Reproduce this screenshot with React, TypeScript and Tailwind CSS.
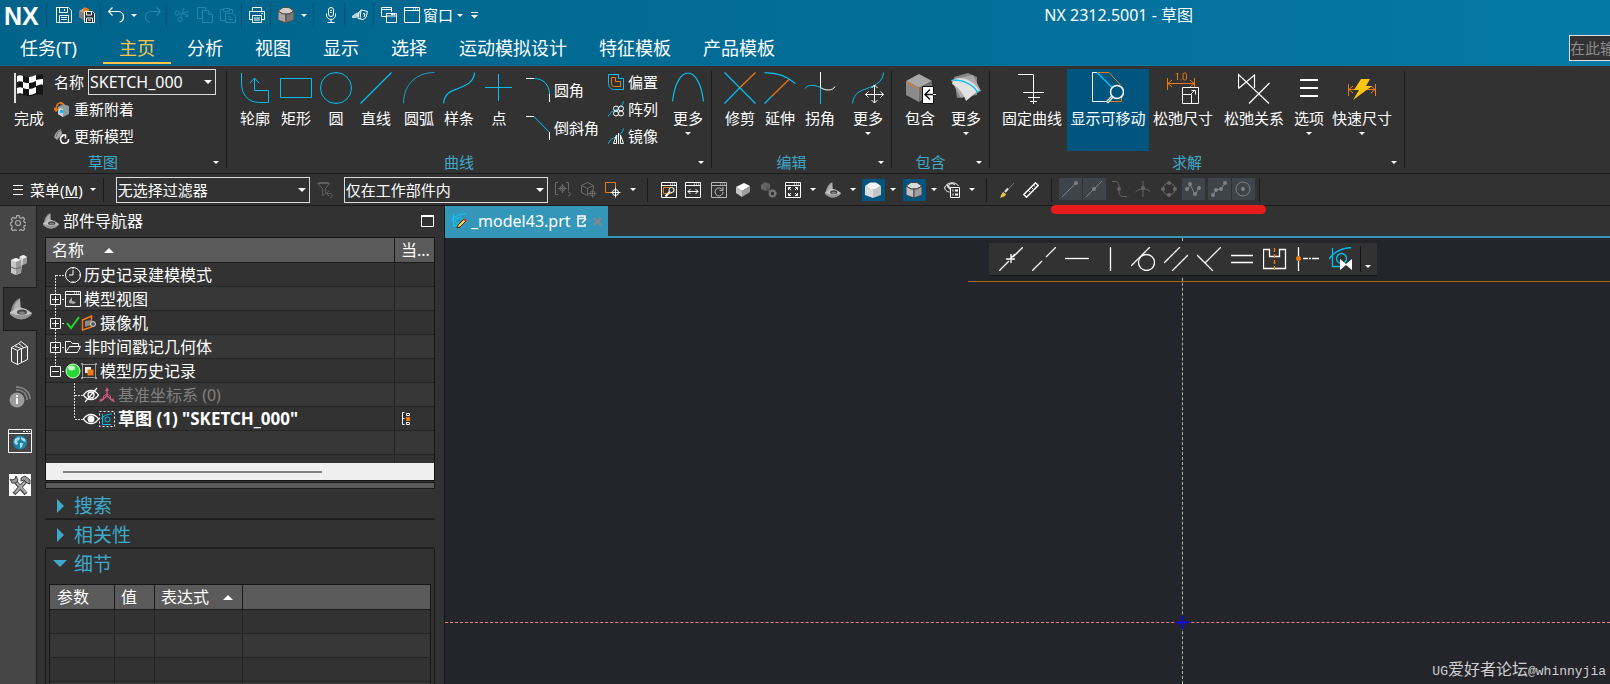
import { useState } from "react";
import type { ReactNode } from "react";

const CYAN = "#00c0f5";
const ORANGE = "#f07a10";

function Svg({
  w = 16,
  h,
  sw = 1,
  children,
}: {
  w?: number;
  h?: number;
  sw?: number;
  children: ReactNode;
}) {
  const height = h ?? w;
  return (
    <svg
      width={w}
      height={height}
      viewBox={`0 0 ${w} ${height}`}
      fill="none"
      stroke="currentColor"
      strokeWidth={sw}
      className="shrink-0"
      aria-hidden="true"
    >
      {children}
    </svg>
  );
}

function Caret({ big = false }: { big?: boolean }) {
  return big ? (
    <Svg w={8} h={4}>
      <path d="M0 0h8l-4 4z" fill="#fff" stroke="none" />
    </Svg>
  ) : (
    <Svg w={6} h={3}>
      <path d="M0 0h6l-3 3z" fill="#fff" stroke="none" />
    </Svg>
  );
}

// ---------- small icons ----------

function SaveIcon() {
  return (
    <Svg>
      <path d="M.5.5h12l3 3v12H.5z" />
      <path d="M3.5.5v5h8v-5M8.5 2v2M3.5 15.5v-7h9v7M5 10.5h6M5 12.5h6" />
    </Svg>
  );
}

function SaveAsIcon() {
  return (
    <Svg>
      <path d="M0 4l5-3 5 2v8l-5 2-5-3z" fill="#b8a79a" stroke="none" />
      <path d="M0 4l5 2v7l-5-3z" fill="#7f7f7f" stroke="none" />
      <path d="M5 0l5 2v3H4z" fill={ORANGE} stroke="none" />
      <path d="M5.5 4.5h8l2 2v9h-10z" fill="#263238" stroke="#fff" />
      <path d="M7.5 5v3h5V5M7.5 15v-4h6v4M9 13h3" stroke="#fff" />
    </Svg>
  );
}

function UndoIcon({ flip = false }: { flip?: boolean }) {
  return (
    <Svg sw={1.2}>
      {flip ? (
        <path d="M15.5 4.5H6c-4 0-5.5 3-5.5 5.5 0 3 2 5 4 5M11.5.5l4 4-4 4" />
      ) : (
        <path d="M.5 4.5H10c4 0 5.5 3 5.5 5.5 0 3-2 5-4 5M4.5.5l-4 4 4 4" />
      )}
    </Svg>
  );
}

function CutIcon() {
  return (
    <Svg>
      <circle cx="3" cy="6" r="2.2" />
      <circle cx="6" cy="12.5" r="2.3" />
      <path d="M5 7l10-2.5M7 10.5L10 1M9 6.5L15 9l-4 .5" />
    </Svg>
  );
}

function CopyIcon() {
  return (
    <Svg>
      <path d="M5.5 11.5h-5V.5h8v3" />
      <path d="M5.5 3.5h6l4 4v8h-10zM11.5 3.5v4h4" />
    </Svg>
  );
}

function PasteIcon() {
  return (
    <Svg>
      <path d="M5 13.5H.5v-11h3M10 2.5h2.5V6M3.5 1.5h6v3h-6z" />
      <path d="M5.5 6.5h7l3 3v6h-10zM8 10h3M8 12.5h5" />
    </Svg>
  );
}

function PrintIcon() {
  return (
    <Svg>
      <path d="M3.5 4.5v-4h9v4M3.5 12.5h-3v-8h15v8h-3" />
      <path d="M3.5 8.5h9v7h-9zM5 11h6M5 13h6M12 6.5h2" />
    </Svg>
  );
}

function SolidIcon({
  top = "#e6e6e6",
  left = "#b5b5b5",
  right = "#8f8f8f",
  line = "none",
  size = 16,
}: {
  top?: string;
  left?: string;
  right?: string;
  line?: string;
  size?: number;
}) {
  return (
    <svg width={size} height={size} viewBox="0 0 16 16" className="shrink-0" aria-hidden="true">
      <path d="M0 4L5 .5h6L16 4l-5 3H5z" fill={top} stroke={line} />
      <path d="M0 4l5 3h3v9l-8-3z" fill={left} stroke={line} />
      <path d="M16 4l-5 3H8v9l8-3z" fill={right} stroke={line} />
    </svg>
  );
}

// plain cube with a bright lid
function CubeIcon() {
  return (
    <Svg w={14}>
      <path d="M0 4l8-4 6 3-8 5z" fill="#fff" stroke="none" />
      <path d="M0 4l6 4v6l-6-4z" fill="#c4c4c4" stroke="none" />
      <path d="M14 3L6 8v6l8-5z" fill="#9c9c9c" stroke="none" />
    </Svg>
  );
}

function MicIcon() {
  return (
    <Svg>
      <rect x="5.5" y=".5" width="5" height="9" rx="2.5" />
      <path d="M3.5 6.5V8a4.5 4.5 0 009 0V6.5M8 12.5v3M4.5 15.5h7M7 3.5h2M7 5.5h2" />
    </Svg>
  );
}

function TouchIcon() {
  return (
    <Svg>
      <path d="M0 9l4-3 4-1-1 4-3 2H0z" fill="#b9d3de" stroke="none" />
      <path d="M6.5 5.5l3-2.5 6 1.5-1.5 6-3 2-5-1zM9 3L8 12" stroke="#fff" />
      <path d="M11 6.5l2 .5-1 3" stroke="#fff" />
    </Svg>
  );
}

function WindowsIcon() {
  return (
    <Svg>
      <path d="M5 9.5H.5v-9h10V5M.5 2.5h10" />
      <path d="M5.5 6.5h10v9h-10zM5.5 9h10M10 7.5h4" />
    </Svg>
  );
}

function WindowIcon() {
  return (
    <Svg>
      <path d="M.5.5h15v15H.5zM.5 3.5h15M9 2h1M11 2h1M13 2h1" />
    </Svg>
  );
}

function FunnelIcon() {
  return (
    <Svg>
      <path d="M.5 1.5l1-1h10l1 1-4 5v5l-3 2v-7zM.5 1.5h12" />
      <path d="M10 11.5h3c3 0 3 4 0 4M12 9l-2.5 2.5L12 14" />
    </Svg>
  );
}

function TargetIcon() {
  return (
    <Svg>
      <path d="M3 .5H.5v12H3M11 .5h2.5v8" />
      <circle cx="7.5" cy="6.5" r="2.5" />
      <path d="M7.5 2v9M3 6.5h9M13 10c3 0 3 4 0 4" />
    </Svg>
  );
}

function BoxTargetIcon() {
  return (
    <Svg>
      <path d="M.5 3.5l6-3 6 3v4M.5 3.5v7l6 3 1-.5M.5 3.5l6 3 6-3M6.5 6.5v7" />
      <circle cx="11.5" cy="11.5" r="2.5" />
      <path d="M11.5 7.5v8M7.5 11.5h8" />
    </Svg>
  );
}

function SquareTargetIcon() {
  return (
    <Svg>
      <path d="M7 10.5H.5V.5h10V6" stroke={ORANGE} />
      <circle cx="10.5" cy="10.5" r="3" />
      <path d="M10.5 5.5v10M5.5 10.5h10" />
    </Svg>
  );
}

function FrameIcon({ kind }: { kind: "zoom" | "width" | "rotate" | "fit" }) {
  return (
    <Svg>
      <path d="M.5.5h15v15H.5zM.5 3.5h15M9 2h1M11 2h1M13 2h1" />
      {kind === "zoom" && (
        <>
          <path d="M2.5 5.5h8v6h-8z" stroke={ORANGE} />
          <path d="M13 5.5v5" stroke={ORANGE} />
          <circle cx="10.5" cy="8" r="2.5" fill="#323232" />
          <path d="M8.5 10l-4 4.5" strokeWidth="2" />
        </>
      )}
      {kind === "width" && <path d="M3 9.5h10M5.5 7L3 9.5 5.5 12M10.5 7L13 9.5 10.5 12" />}
      {kind === "rotate" && <path d="M11.5 8a4 4 0 10.5 2M12 5v3.5H8.5" />}
      {kind === "fit" && (
        <path d="M3.5 8V5.5H6M3.5 5.5L6 8M10 5.5h2.5V8M12.5 5.5L10 8M3.5 11v2.5H6M3.5 13.5L6 11M10 13.5h2.5V11M12.5 13.5L10 11" />
      )}
    </Svg>
  );
}

function GearsIcon() {
  return (
    <Svg>
      <path d="M0 3l4-3 5 2v5L5 9 0 7z" fill="#626262" stroke="none" />
      <path d="M5 5l4 1v4l-4-2z" fill="#505050" stroke="none" />
      <circle cx="11.5" cy="11.5" r="2.7" stroke="#777" strokeWidth="2" />
      <circle cx="11.5" cy="11.5" r="4.2" stroke="#6a6a6a" strokeDasharray="1.5 1.5" />
    </Svg>
  );
}

// hinged bracket used for the part navigator
function PartIcon({ size = 16 }: { size?: number }) {
  return (
    <svg width={size} height={size} viewBox="0 0 22 22" className="shrink-0" aria-hidden="true">
      <path d="M1 13C2 7 5 2 10 0l1 10-9 5z" fill="#8a8a8a" />
      <path d="M3 13c1-6 3-9 7-12v8z" fill="#b0b0b0" />
      <path d="M0 14l9-5 7 2 6 4c-1 3-7 6-11 6S3 19 0 16z" fill="#c4c4c4" />
      <path d="M0 14.5c4 3 14 4 22 1-1 3-7 6-11 6S3 19 0 16.5z" fill="#949494" />
      <ellipse cx="12" cy="14" rx="5" ry="2.6" fill="#444" />
      <ellipse cx="12" cy="14.8" rx="3.3" ry="1.4" fill="#808080" />
    </svg>
  );
}

function ViewListIcon() {
  return (
    <Svg>
      <path d="M.5 6c2-6 11-7 14-2M.5 6c1 2 2 4 5 4M4 6a4 4 0 017-3" />
      <path d="M3 2.5L7 8" stroke="#ddd" strokeWidth="2" />
      <path d="M6.5 5.5h9v10h-9z" fill="#323232" />
      <path d="M8.5 8.5h1M11 8.5h3M8.5 12.5h1M11 12.5h3" strokeWidth="2" />
    </Svg>
  );
}

function BrushIcon() {
  return (
    <Svg>
      <path d="M15 1L7 9.5" stroke="#777" />
      <path d="M9 6.5L6 10" stroke="#ddd" strokeWidth="2" />
      <path d="M4 10l3 2c0 2-3 3-6 4 1-2 1-4 3-6z" fill="#e6c34a" stroke="none" />
    </Svg>
  );
}

function RulerIcon() {
  return (
    <Svg>
      <path d="M.8 12.5L12.5.8l2.7 2.7L3.5 15.2z" strokeWidth="1.5" />
      <path d="M5 8l2 2M8 5l2 2M10.5 3L12 4.5" />
    </Svg>
  );
}

type SnapKind = "end" | "mid" | "pole" | "cross" | "quad" | "curve" | "poly" | "center";

function SnapIcon({ kind }: { kind: SnapKind }) {
  const dot = (cx: number, cy: number) => (
    <circle key={`${cx}-${cy}`} cx={cx} cy={cy} r="2" fill="currentColor" stroke="none" />
  );
  return (
    <Svg>
      {kind === "end" && <path d="M0 16L14 2" />}
      {kind === "end" && dot(14, 2)}
      {kind === "mid" && <path d="M0 16L16 0" />}
      {kind === "mid" && dot(8, 8)}
      {kind === "pole" && <path d="M1 .5h3c3 0 4 2 4 6v3c0 4 1 6 4 6h4" />}
      {kind === "pole" && dot(8, 8)}
      {kind === "cross" && <path d="M8 0v16M.5 11c3-4 12-4 15 0" />}
      {kind === "cross" && dot(8, 7)}
      {kind === "quad" && <circle cx="8" cy="8" r="6" />}
      {kind === "quad" && [dot(8, 2), dot(2, 8), dot(14, 8), dot(8, 14)]}
      {kind === "curve" && <path d="M0 8h3l2-5 5 11 4-7" />}
      {kind === "curve" && [dot(2, 8), dot(5, 3), dot(10, 13), dot(14, 7)]}
      {kind === "poly" && <path d="M2 14l3-5 5-1 4-6" />}
      {kind === "poly" && [dot(2, 14), dot(5, 9), dot(10, 8), dot(14, 2)]}
      {kind === "center" && <circle cx="8" cy="8" r="7" />}
      {kind === "center" && dot(8, 8)}
    </Svg>
  );
}

// ---------- ribbon icons, 32px box ----------

function FlagIcon() {
  return (
    <Svg w={32}>
      <path d="M2 1v30" stroke="#ddd" strokeWidth="2" />
      <path d="M4 4c6-3 9 3 14 1s8-3 12-2v20c-5-1-7 0-12 1s-9-3-14-1z" fill="#151515" stroke="none" />
      <path
        d="M4 4c2-1 4-1 6 0v6c-2-1-4-1-6 0zM16 5c2 0 4-1 7-2v6c-3 1-4 2-7 2zM10 10c2 1 4 1 6 1v6c-2 0-4 0-6-1zM23 8c3-1 5-1 7-1v6c-2-1-4 0-7 1zM4 16c2-1 4-1 6 0v6c-2-1-4-1-6 0zM16 17c3 0 4-1 7-2v6c-3 1-4 2-7 2z"
        fill="#fff"
        stroke="none"
      />
    </Svg>
  );
}

function ProfileIcon() {
  return (
    <Svg w={32}>
      <path d="M2.5 1v10c0 11 6 19 17 19.5h10v-12h-14v-12M11 11l4.5-5 4.5 5" stroke={CYAN} />
    </Svg>
  );
}

function RectIcon() {
  return (
    <Svg w={32}>
      <path d="M.5 6.5h31v19H.5z" stroke={CYAN} />
    </Svg>
  );
}

function CircleIcon() {
  return (
    <Svg w={32}>
      <circle cx="16" cy="16" r="15.5" stroke={CYAN} />
    </Svg>
  );
}

function LineIcon() {
  return (
    <Svg w={32} sw={1.2}>
      <path d="M.5 31.5l31-31" stroke={CYAN} />
    </Svg>
  );
}

function ArcIcon() {
  return (
    <Svg w={32}>
      <path d="M.5 31.5C.5 13 13 .5 31.5.5" stroke="#1e9fc0" />
    </Svg>
  );
}

function SplineIcon() {
  return (
    <Svg w={32} sw={1.2}>
      <path d="M.5 31.5C2 20 9 19 15 16.5S31 11 31.5.5" stroke={CYAN} />
    </Svg>
  );
}

function PointIcon() {
  return (
    <Svg w={32}>
      <path d="M15.5 2v27M2 15.5h27" stroke={CYAN} />
    </Svg>
  );
}

function FilletIcon() {
  return (
    <Svg w={24}>
      <path d="M8 .5c9 0 15.5 6 15.5 16" stroke={CYAN} />
      <path d="M0 .5h8M23.5 16v8" stroke="#fff" />
    </Svg>
  );
}

function ChamferIcon() {
  return (
    <Svg w={24}>
      <path d="M8 .5l15.5 16" stroke={CYAN} />
      <path d="M0 .5h8M23.5 16v8" stroke="#fff" />
    </Svg>
  );
}

function OffsetIcon() {
  return (
    <Svg>
      <path d="M.5.5h10v4h5v11h-9c-4 0-6-3-6-6z" stroke={CYAN} />
      <path d="M3.5 3.5h4v4h5v5h-6c-2 0-3-1-3-3z" stroke={ORANGE} />
    </Svg>
  );
}

function PatternIcon() {
  return (
    <Svg>
      <path d="M.5 15.5C2 8 14 10 15.5.5" stroke={CYAN} />
      <circle cx="8" cy="7.5" r="2.5" />
      <circle cx="13" cy="7.5" r="2.5" />
      <circle cx="8" cy="12.5" r="2.5" />
      <circle cx="13" cy="12.5" r="2.5" />
    </Svg>
  );
}

function MirrorIcon() {
  return (
    <Svg>
      <path d="M.5 15.5C2 8 14 10 15.5.5" stroke={CYAN} />
      <path d="M5.5 15.5h3V7zM12.5 7v8.5h3zM10.5 5v11" />
    </Svg>
  );
}

function ParabolaIcon() {
  return (
    <Svg w={32} sw={1.2}>
      <path d="M.5 29.5C5-8.5 27-8.5 31.5 29.5" stroke={CYAN} />
    </Svg>
  );
}

function TrimIcon() {
  return (
    <Svg w={32} sw={1.2}>
      <path d="M.5.5l31 31M.5 31.5L16 15.5" stroke={CYAN} />
      <path d="M16 15.5L31.5.5" stroke={ORANGE} />
    </Svg>
  );
}

function ExtendIcon() {
  return (
    <Svg w={32} sw={1.2}>
      <path d="M.5.6c10 0 22 3 31 11M.5 31.5l7-7" stroke={CYAN} />
      <path d="M7.5 24.5L25 7.5" stroke={ORANGE} />
    </Svg>
  );
}

function CornerIcon() {
  return (
    <Svg w={32}>
      <path d="M1 16.5c3-4 9-4 15.5-1V32" stroke={CYAN} />
      <path d="M16.5 0v15.5c4 3 12 4 14.5-1" stroke="#fff" />
    </Svg>
  );
}

function MoveCurveIcon() {
  return (
    <Svg w={32}>
      <path d="M.5 31.5C2 20 9 19 15 16.5S31 11 31.5.5" stroke={CYAN} />
      <path
        d="M22.5 13v18M13.5 22.5h18M19.5 16l3-3 3 3M19.5 28l3 3 3-3M16.5 19.5l-3 3 3 3M28.5 19.5l3 3-3 3"
        stroke="#fff"
      />
    </Svg>
  );
}

function IncludeIcon() {
  return (
    <Svg w={32}>
      <path d="M2 9l13-7 13 7-13 7z" fill="#a8a8a8" stroke="none" />
      <path d="M2 9l13 7v14L2 23z" fill="#8a8a8a" stroke="none" />
      <path d="M28 9l-13 7v14l13-7z" fill="#6f6f6f" stroke="none" />
      <path d="M2 10l13 7" stroke={ORANGE} />
      <path d="M18.5 14.5h11v17h-11z" fill="#fff" stroke="#111" />
      <path d="M29 22.5h-8M26 17.5l-5 5 5 5" stroke="#111" strokeWidth="1.5" />
      <path d="M29 22.5h3" stroke="#fff" />
    </Svg>
  );
}

function SurfaceIcon() {
  return (
    <Svg w={32}>
      <path d="M4 5L18 1l9 4v18L7 26z" fill="#868686" stroke="none" />
      <path d="M1 8L23 3l8 16-20 7z" fill="#ababab" stroke="none" />
      <path d="M4 7c9-3 20 2 25 11L16 29C14 22 8 15 2 12z" fill="#e2e2e2" stroke="none" />
      <path d="M3 8c10 0 20 4 25 13" stroke={CYAN} strokeWidth="1.5" />
    </Svg>
  );
}

function FixIcon() {
  return (
    <Svg w={32}>
      <path d="M2 2.5h15.5v17M7 20.5h21M12 25.5h12M14 29.5h7M17.5 19v13" stroke="#fff" />
    </Svg>
  );
}

function ShowMovableIcon() {
  return (
    <Svg w={32}>
      <path d="M5 .5H.5v29H16" stroke="#fff" />
      <path d="M5 .5l15 15" stroke={CYAN} strokeWidth="1.5" />
      <path d="M6 .5h11l12 13M29.5 24v5.5H17" stroke={ORANGE} />
      <circle cx="25" cy="20" r="6.5" fill="#00557f" stroke="#fff" strokeWidth="1.5" />
      <path d="M20 25l-5 5.5" stroke="#fff" strokeWidth="3" />
      <path d="M19.5 25.5l-4 4.5" stroke="#00557f" />
    </Svg>
  );
}

function RelaxDimIcon() {
  return (
    <Svg w={32}>
      <path d="M.5 6v12M27.5 6v10M1 11.5h26M5 8l-4 3.5L5 15M23 8l4 3.5-4 3.5" stroke={ORANGE} />
      <path d="M9 2.5L10.5 1v7M13.5 8h1" stroke={ORANGE} />
      <rect x="16" y="1" width="3.5" height="7" rx="1.7" stroke={ORANGE} />
      <path
        d="M15.5 15.5h16v16h-16zM15.5 22.5h9v9M24 22l4-4M24.5 18.5h4v4"
        fill="#323232"
        stroke="#fff"
      />
    </Svg>
  );
}

function RelaxRelIcon() {
  return (
    <Svg w={32} sw={1.2}>
      <path d="M.5 16.5v-14L31 31.5M.5 16.5L16.5 3v13M11 31.5L31.5 11" stroke="#fff" />
    </Svg>
  );
}

function OptionsIcon() {
  return (
    <Svg w={32}>
      <path d="M7 8h18M7 16h18M7 24h18" stroke="#fff" strokeWidth="2" />
    </Svg>
  );
}

function QuickDimIcon() {
  return (
    <Svg w={32}>
      <path d="M2.5 12v12M29.5 12v12M3 17.5h26M7 14l-4 3.5L7 21M25 14l4 3.5-4 3.5" stroke={ORANGE} />
      <path d="M15 7h9l-4 7h6L7 28l6-10H8z" fill="#ffc40c" stroke="none" />
    </Svg>
  );
}

// ---------- ribbon parts ----------

function RibbonGroup({ title, children }: { title: string; children: ReactNode }) {
  return (
    <>
      <section className="flex flex-col" aria-label={title}>
        <div className="flex h-[82px]">{children}</div>
        <div className="flex h-[22px] items-center text-[#3fa9cb]">
          <span className="flex-1 text-center">{title}</span>
          <button className="flex w-5 items-center justify-center" aria-label={`${title} 选项`}>
            <Caret />
          </button>
        </div>
      </section>
      <div className="mt-0.5 mb-[5px] w-px bg-[#1b1b1b]" />
    </>
  );
}

function BigButton({
  icon,
  label,
  className = "w-10",
  menu = false,
}: {
  icon: ReactNode;
  label: string;
  className?: string;
  menu?: boolean;
}) {
  return (
    <button className={`flex flex-col items-center pt-[3px] whitespace-nowrap ${className}`}>
      {icon}
      <span className="mt-1 leading-5">{label}</span>
      {menu && (
        <span className="mt-1">
          <Caret />
        </span>
      )}
    </button>
  );
}

function RowButton({ icon, label }: { icon: ReactNode; label: string }) {
  return (
    <button className="flex h-[27px] items-center gap-1 pb-0.5 whitespace-nowrap">
      {icon}
      {label}
    </button>
  );
}

function Ribbon() {
  return (
    <div className="flex h-[108px] shrink-0 border-b border-[#1b1b1b] pt-[3px]">
      <RibbonGroup title="草图">
        <BigButton className="ml-[9px] w-10" icon={<FlagIcon />} label="完成" />
        <div className="mr-2.5 ml-[5px] flex flex-col">
          <div className="flex h-[27px] gap-1">
            <label htmlFor="sketch-name" className="leading-[26px]">
              名称
            </label>
            <Select id="sketch-name" className="w-32 text-base" options={["SKETCH_000"]} />
          </div>
          <RowButton
            icon={
              <Svg>
                <path d="M4 6l5-3 6 2v8l-6 3-5-3z" fill="#8d9aa0" stroke="none" />
                <path d="M4 6l5 2v8l-5-3z" fill="#c6d4d9" stroke="none" />
                <path d="M6 9h3v3H6z" fill={CYAN} stroke="none" />
                <path d="M10 4c-3-4-8-2-8 5M0 7l2 3 3-3" stroke={ORANGE} strokeWidth="1.5" />
              </Svg>
            }
            label="重新附着"
          />
          <RowButton
            icon={
              <Svg>
                <path d="M0 9C1 5 4 2 7 1l1 5-5 6z" fill="#a5a5a5" stroke="none" />
                <path d="M2 9C3 5 5 3 7 2" stroke="#6d6d6d" />
                <path d="M9.500 7.500A4 4 0 1014.500 11M8 7h3.500v3.500" strokeWidth="1.5" />
              </Svg>
            }
            label="更新模型"
          />
        </div>
      </RibbonGroup>

      <RibbonGroup title="曲线">
        <BigButton className="ml-2 w-10" icon={<ProfileIcon />} label="轮廓" />
        <BigButton className="ml-px w-10" icon={<RectIcon />} label="矩形" />
        <BigButton icon={<CircleIcon />} label="圆" />
        <BigButton icon={<LineIcon />} label="直线" />
        <BigButton className="ml-[3px] w-10" icon={<ArcIcon />} label="圆弧" />
        <BigButton icon={<SplineIcon />} label="样条" />
        <BigButton icon={<PointIcon />} label="点" />
        <div className="mt-2 ml-[7px] flex flex-col gap-[11px]">
          <RowButton icon={<FilletIcon />} label="圆角" />
          <RowButton icon={<ChamferIcon />} label="倒斜角" />
        </div>
        <div className="ml-[9px] flex flex-col">
          <RowButton icon={<OffsetIcon />} label="偏置" />
          <RowButton icon={<PatternIcon />} label="阵列" />
          <RowButton icon={<MirrorIcon />} label="镜像" />
        </div>
        <BigButton className="mr-[3px] ml-2.5 w-10" icon={<ParabolaIcon />} label="更多" menu />
      </RibbonGroup>

      <RibbonGroup title="编辑">
        <BigButton className="ml-2 w-10" icon={<TrimIcon />} label="修剪" />
        <BigButton icon={<ExtendIcon />} label="延伸" />
        <BigButton icon={<CornerIcon />} label="拐角" />
        <BigButton className="mr-[3px] ml-2 w-10" icon={<MoveCurveIcon />} label="更多" menu />
      </RibbonGroup>

      <RibbonGroup title="包含">
        <BigButton className="ml-2 w-10" icon={<IncludeIcon />} label="包含" />
        <BigButton className="mr-[3px] ml-1.5 w-10" icon={<SurfaceIcon />} label="更多" menu />
      </RibbonGroup>

      <RibbonGroup title="求解">
        <BigButton className="ml-[7px] w-[70px]" icon={<FixIcon />} label="固定曲线" />
        <BigButton className="w-[82px] bg-[#00557f]" icon={<ShowMovableIcon />} label="显示可移动" />
        <BigButton className="w-[68px]" icon={<RelaxDimIcon />} label="松弛尺寸" />
        <BigButton className="ml-px w-[72px]" icon={<RelaxRelIcon />} label="松弛关系" />
        <BigButton className="w-[38px]" icon={<OptionsIcon />} label="选项" menu />
        <BigButton className="mr-2 w-[68px]" icon={<QuickDimIcon />} label="快速尺寸" menu />
      </RibbonGroup>
    </div>
  );
}

function Select({
  id,
  label,
  className,
  options,
}: {
  id?: string;
  label?: string;
  className: string;
  options: string[];
}) {
  return (
    <span className={`relative flex h-[26px] ${className}`}>
      <select
        id={id}
        aria-label={label}
        className="w-full appearance-none border border-[#dcdcdc] bg-[#323232] pl-px leading-6 text-white"
      >
        {options.map((o) => (
          <option key={o}>{o}</option>
        ))}
      </select>
      <span className="pointer-events-none absolute top-[11px] right-1">
        <Caret big />
      </span>
    </span>
  );
}

// ---------- title bar ----------

function TitleButton({
  label,
  dim = false,
  children,
}: {
  label: string;
  dim?: boolean;
  children: ReactNode;
}) {
  return (
    <button
      aria-label={label}
      className={`flex h-6 w-[23px] items-center justify-center ${dim ? "text-[#1f87ae]" : "text-white"}`}
    >
      {children}
    </button>
  );
}

function CaretButton({ label }: { label: string }) {
  return (
    <button aria-label={label} className="flex h-6 w-3.5 items-center justify-center">
      <Caret />
    </button>
  );
}

function TitleSep({ wide = false }: { wide?: boolean }) {
  return <div className={`ml-0.5 h-6 w-px bg-[#004f70] ${wide ? "mr-[5px]" : "mr-[3px]"}`} />;
}

const TABS = ["主页", "分析", "视图", "显示", "选择", "运动模拟设计", "特征模板", "产品模板"];

function Header() {
  const [tab, setTab] = useState("主页");
  return (
    <header className="flex h-[66px] shrink-0 flex-col bg-linear-to-r from-[#00638a] to-[#0578a5]">
      <div className="flex h-[30px] items-center">
        <span className="w-11 pt-0.5 pl-1 font-['Liberation_Sans'] text-[25px] leading-7 font-bold">
          NX
        </span>
        <TitleSep wide />
        <TitleButton label="保存">
          <SaveIcon />
        </TitleButton>
        <TitleButton label="另存为">
          <SaveAsIcon />
        </TitleButton>
        <TitleSep />
        <TitleButton label="撤消">
          <UndoIcon />
        </TitleButton>
        <CaretButton label="撤消列表" />
        <TitleButton label="重做" dim>
          <UndoIcon flip />
        </TitleButton>
        <TitleSep />
        <TitleButton label="剪切" dim>
          <CutIcon />
        </TitleButton>
        <TitleButton label="复制" dim>
          <CopyIcon />
        </TitleButton>
        <TitleButton label="粘贴" dim>
          <PasteIcon />
        </TitleButton>
        <TitleSep />
        <TitleButton label="打印">
          <PrintIcon />
        </TitleButton>
        <TitleSep />
        <TitleButton label="命令查找">
          <SolidIcon top="#d8cdc6" left="#aaa6a3" right="#7d7977" line="#4c4c4c" />
        </TitleButton>
        <CaretButton label="更多命令" />
        <TitleSep wide />
        <TitleButton label="语音">
          <MicIcon />
        </TitleButton>
        <TitleSep />
        <TitleButton label="触控">
          <TouchIcon />
        </TitleButton>
        <TitleSep />
        <TitleButton label="层叠窗口">
          <WindowsIcon />
        </TitleButton>
        <button className="flex items-center">
          <span className="flex w-[23px] justify-center">
            <WindowIcon />
          </span>
          窗口
          <span className="flex w-3.5 justify-center">
            <Caret />
          </span>
        </button>
        <button aria-label="自定义" className="flex w-3.5 justify-center">
          <Svg w={7} h={7}>
            <path d="M0 .5h7" />
            <path d="M0 3h7L3.5 6.5z" fill="#fff" stroke="none" />
          </Svg>
        </button>
        <h1 className="ml-auto pr-[417px] text-base leading-6">NX 2312.5001 - 草图</h1>
      </div>
      <nav className="flex flex-1 items-start text-lg leading-7">
        <button className="h-[34px] w-[103px] border-b-2 border-transparent pt-1 pl-5 text-left">
          任务(T)
        </button>
        {TABS.map((t) => (
          <button
            key={t}
            onClick={() => setTab(t)}
            className={`h-[34px] border-b-2 px-4 pt-1 ${
              t === tab ? "border-[#ffc54a] text-[#ffc54a]" : "border-transparent"
            }`}
          >
            {t}
          </button>
        ))}
        <input
          aria-label="命令搜索"
          placeholder="在此输入"
          className="mt-[5px] ml-auto h-[26px] w-[41px] border border-r-0 border-[#dcdcdc] bg-[#323232] text-[15px] placeholder:text-[#8a8a8a]"
        />
      </nav>
    </header>
  );
}

// ---------- selection bar ----------

function ToolButton({
  label,
  className = "",
  children,
}: {
  label: string;
  className?: string;
  children: ReactNode;
}) {
  return (
    <button
      aria-label={label}
      className={`mr-px flex h-[22px] w-[23px] items-center justify-center ${className}`}
    >
      {children}
    </button>
  );
}

const ToolSep = () => <div className="mx-[7px] h-6 w-px bg-[#1b1b1b]" />;

function SelectionBar() {
  return (
    <div className="relative flex h-8 shrink-0 items-center border-b border-[#1b1b1b]">
      <button className="flex items-center pl-[13px]">
        <Svg w={10} h={10}>
          <path d="M0 .5h10M0 4.5h10M0 9.5h10" />
        </Svg>
        <span className="mr-[7px] ml-[7px]">
          菜单(<u>M</u>)
        </span>
        <Caret />
      </button>
      <ToolSep />
      <Select label="类型过滤器" className="ml-[5px] w-[194px]" options={["无选择过滤器"]} />
      <ToolButton label="重置过滤器" className="ml-1 text-[#5f5f5f]">
        <FunnelIcon />
      </ToolButton>
      <Select label="选择范围" className="mr-1 ml-1.5 w-[204px]" options={["仅在工作部件内"]} />
      <ToolButton label="高亮" className="text-[#6a6a6a]">
        <TargetIcon />
      </ToolButton>
      <ToolButton label="体内选择" className="ml-0.5 text-[#6a6a6a]">
        <BoxTargetIcon />
      </ToolButton>
      <ToolButton label="框选">
        <SquareTargetIcon />
      </ToolButton>
      <CaretButton label="框选方式" />
      <ToolSep />
      <ToolButton label="缩放" className="ml-[3px]">
        <FrameIcon kind="zoom" />
      </ToolButton>
      <ToolButton label="平移">
        <FrameIcon kind="width" />
      </ToolButton>
      <ToolButton label="旋转" className="ml-0.5 text-[#b5b5b5]">
        <FrameIcon kind="rotate" />
      </ToolButton>
      <ToolButton label="透视">
        <CubeIcon />
      </ToolButton>
      <ToolButton label="装配" className="ml-0.5">
        <GearsIcon />
      </ToolButton>
      <ToolButton label="适合窗口">
        <FrameIcon kind="fit" />
      </ToolButton>
      <CaretButton label="适合选项" />
      <ToolButton label="定向" className="ml-0.5">
        <PartIcon />
      </ToolButton>
      <CaretButton label="定向选项" />
      <ToolButton label="着色" className="ml-0.5 bg-[#00557f]">
        <SolidIcon top="#f5f5f5" left="#dcdcdc" right="#c4c4c4" />
      </ToolButton>
      <CaretButton label="着色选项" />
      <ToolButton label="带边着色" className="ml-[3px] bg-[#00557f]">
        <SolidIcon top="#d8d8d8" left="#c0c0c0" right="#a0a0a0" line="#444" />
      </ToolButton>
      <CaretButton label="边选项" />
      <ToolButton label="显示和隐藏">
        <ViewListIcon />
      </ToolButton>
      <CaretButton label="显示选项" />
      <ToolSep />
      <ToolButton label="编辑对象显示" className="ml-0.5">
        <BrushIcon />
      </ToolButton>
      <ToolButton label="测量">
        <RulerIcon />
      </ToolButton>
      <ToolSep />
      <div className="flex text-[#7d8184]">
        <ToolButton label="端点" className="bg-[#3e4449]">
          <SnapIcon kind="end" />
        </ToolButton>
        <ToolButton label="中点" className="bg-[#3e4449]">
          <SnapIcon kind="mid" />
        </ToolButton>
        <ToolButton label="极点" className="ml-px text-[#646464]">
          <SnapIcon kind="pole" />
        </ToolButton>
        <ToolButton label="交点" className="text-[#646464]">
          <SnapIcon kind="cross" />
        </ToolButton>
        <ToolButton label="象限点" className="ml-0.5 text-[#6a6a6a]">
          <SnapIcon kind="quad" />
        </ToolButton>
        <ToolButton label="曲线上的点" className="bg-[#3e4449]">
          <SnapIcon kind="curve" />
        </ToolButton>
        <ToolButton label="控制点" className="ml-0.5 bg-[#3e4449]">
          <SnapIcon kind="poly" />
        </ToolButton>
        <ToolButton label="圆弧中心" className="bg-[#3e4449]">
          <SnapIcon kind="center" />
        </ToolButton>
        <div className="ml-[3px] h-6 w-px bg-[#1b1b1b]" />
      </div>
      {/* marker stroke under the snap buttons */}
      <div className="absolute top-[31px] left-[1051px] z-10 h-[9px] w-[215px] rounded-full bg-[#e81c1c]" />
    </div>
  );
}

// ---------- resource bar and navigator ----------

function RailButton({
  label,
  className = "h-11",
  children,
}: {
  label: string;
  className?: string;
  children: ReactNode;
}) {
  return (
    <button
      aria-label={label}
      className={`flex shrink-0 items-center justify-center ${className}`}
    >
      {children}
    </button>
  );
}

function ResourceBar() {
  return (
    <aside className="flex w-[37px] shrink-0 flex-col border-r border-[#1f1f1f] bg-[#464646]">
      <RailButton label="设置" className="h-9 pb-0.5">
        <Svg sw={1.2}>
          <circle cx="8" cy="8" r="2.5" stroke="#aaa" />
          <path
            d="M6.8.7h2.4l.5 2 1.5.6 1.800-1 1.700 1.700-1 1.800.6 1.500 2 .5v2.400l-2 .5-.6 1.500 1 1.800-1.700 1.700-1.800-1-1.500.6-.5 2H6.8l-.5-2-1.500-.6-1.800 1L1.300 14l1-1.800-.6-1.500-1-.5V7.800l1-.5.6-1.500-1-1.800L3 2.300l1.800 1 1.500-.6z"
            stroke="#aaa"
          />
        </Svg>
      </RailButton>
      <RailButton label="装配导航器" className="h-[45px] pl-0.5">
        <Svg w={18} h={22}>
          <path d="M1 6l5-2 3 1 2-3 3-1 3 2v6l-5 2-1 8-5 2-5-2z" fill="#c9c9c9" stroke="none" />
          <path d="M1 6l5-2 4 2-4 2zM9 3l4-2 4 2-4 2z" fill="#f0f0f0" stroke="none" />
          <path d="M6 8l5-2v12l-5 3zM13 5l4-2v6l-4 2z" fill="#9a9a9a" stroke="none" />
          <path d="M1 13l5 2 5-2" stroke="#666" />
        </Svg>
      </RailButton>
      <button
        aria-label="部件导航器"
        className="-mr-px ml-[3px] flex h-11 items-center justify-center border border-r-0 border-[#1b1b1b] bg-[#323232]"
      >
        <PartIcon size={22} />
      </button>
      <RailButton label="重用库" className="h-11 pl-1">
        <Svg w={18} h={24}>
          <path
            d="M.5 6.5l6 3v14l-6-3zM6.5 9.5l4-2v14l-4 2M10.5 7.5l6-2v13l-6 3M.5 6.5L7.500 2.500M4 5l6 2.500M7.500 2.500L10 .5l6.500 5M7.500 2.500l5 4"
            stroke="#fff"
          />
        </Svg>
      </RailButton>
      <RailButton label="历史记录" className="h-11 pl-1">
        <Svg w={24}>
          <circle cx="9" cy="15" r="7.5" fill="#9b9b9b" stroke="none" />
          <path d="M9 13v6M9 10v2" stroke="#fff" strokeWidth="2" />
          <path d="M8 5c7 0 11 4 11 10M8 2c8 0 14 5 14 12" stroke="#8a8a8a" strokeWidth="1.5" />
        </Svg>
      </RailButton>
      <RailButton label="浏览器" className="h-11 pl-1">
        <Svg w={24}>
          <path d="M.5.5h23v23H.5zM.5 4.5h23M15 2.5h2M18 2.5h2M21 2.5h1" stroke="#fff" />
          <circle cx="12" cy="13.5" r="7" fill="#1d86a8" stroke="none" />
          <path
            d="M7 10l3-2 2 1-1 2-2 1 1 3-2 1-2-3zM13 8l4 2 1 3-3-1-2-2zM12 14h3l-1 4-2 1z"
            fill="#a9dcea"
            stroke="none"
          />
        </Svg>
      </RailButton>
      <RailButton label="工具" className="h-11 pl-1">
        <Svg w={22}>
          <path d="M0 0h22v22H0z" fill="#fff" stroke="none" />
          <path d="M5 6l12 14M17 7L5 20" stroke="#444" strokeWidth="4" />
          <path d="M5 6l12 13M16 8L6 19" stroke="#a8a8a8" strokeWidth="2" />
          <path
            d="M1 5l2 4h4l2-3-2-4-1 3-3 1zM12 4l4-2 5 4v4l-3-1-3-3-3 1z"
            fill="#999"
            stroke="#444"
          />
        </Svg>
      </RailButton>
    </aside>
  );
}

// dotted connector plus the expand box in front of a tree row
function Branch({
  box,
  first = false,
  last = false,
}: {
  box?: "plus" | "minus";
  first?: boolean;
  last?: boolean;
}) {
  return (
    <Svg w={19} h={24}>
      <path
        d={`M9.5 ${first ? 12 : 0}V${last ? 12 : 24}M10 12.5h9`}
        stroke="#e0e0e0"
        strokeDasharray="2 1"
      />
      {box && <path d="M4.5 7.5h10v10h-10z" fill="#323232" stroke="#fff" />}
      {box && <path d={box === "plus" ? "M6 12.5h7M9.5 9v7" : "M6 12.5h7"} stroke="#fff" />}
    </Svg>
  );
}

function ChildBranch({ last = false }: { last?: boolean }) {
  return (
    <Svg w={37} h={24}>
      <path d={`M28.5 0V${last ? 12 : 24}M29 12.5h8`} stroke="#e0e0e0" strokeDasharray="2 1" />
    </Svg>
  );
}

function TreeRow({
  children,
  status,
  odd = false,
}: {
  children?: ReactNode;
  status?: ReactNode;
  odd?: boolean;
}) {
  return (
    <tr className={odd ? "bg-[#373737]" : ""}>
      <td className="border-r border-b border-[#242424] p-0">
        <div className="flex h-[23px] items-center overflow-hidden whitespace-nowrap">{children}</div>
      </td>
      <td className="border-b border-[#242424] p-0 pl-[7px]">{status}</td>
    </tr>
  );
}

function SortArrow() {
  return (
    <Svg w={10} h={5}>
      <path d="M0 5h10L5 0z" fill="#fff" stroke="none" />
    </Svg>
  );
}

function PartTree() {
  return (
    <div className="mr-[9px] ml-2 h-[244px] overflow-hidden border border-[#151515]">
      <table className="w-full table-fixed border-separate border-spacing-0 text-base">
        <thead>
          <tr className="h-[25px] bg-[#5a5a5a] text-left leading-6">
            <th className="border-r border-b border-[#1b1b1b] p-0 pl-1.5 font-normal">
              <span className="flex items-center gap-5">
                名称
                <SortArrow />
              </span>
            </th>
            <th className="w-[39px] border-b border-[#1b1b1b] p-0 pl-1.5 font-normal">当...</th>
          </tr>
        </thead>
        <tbody>
          <TreeRow>
            <Branch first />
            <Svg>
              <circle cx="8" cy="8" r="7.5" />
              <path d="M8 3v5H4M8 1v1M8 14v1M14 8h1" />
            </Svg>
            <span className="ml-[3px]">历史记录建模模式</span>
          </TreeRow>
          <TreeRow odd>
            <Branch box="plus" />
            <Svg>
              <path d="M.5.5h15v15H.5zM.5 3.5h15M9 2h1M11 2h1M13 2h1" />
              <path d="M4 10l3-4v4l4 1-2 2-5-1z" fill="#aaa" stroke="none" />
            </Svg>
            <span className="ml-[3px]">模型视图</span>
          </TreeRow>
          <TreeRow>
            <Branch box="plus" />
            <Svg>
              <path d="M2 8l4 5 8-11" stroke="#1fdc2c" strokeWidth="2" />
            </Svg>
            <Svg>
              <path d="M1.5 5l9-4v11l-9 3z" stroke={ORANGE} strokeWidth="1.5" />
              <path d="M4 6l6-1v5l-6 2z" fill="#8a8a8a" stroke="none" />
              <circle cx="12" cy="9" r="2.5" fill="#555" stroke="#ddd" />
            </Svg>
            <span className="ml-[3px]">摄像机</span>
          </TreeRow>
          <TreeRow odd>
            <Branch box="plus" />
            <Svg>
              <path d="M.5 13.5v-11h5l2 2h6v3M.5 13.5h12l3-6h-11z" />
            </Svg>
            <span className="ml-[3px]">非时间戳记几何体</span>
          </TreeRow>
          <TreeRow>
            <Branch box="minus" last />
            <Svg>
              <circle cx="8" cy="8" r="7" fill="#28d935" stroke="#d8ffd8" />
              <ellipse cx="6.5" cy="5" rx="3.5" ry="2.5" fill="#c7ffc9" stroke="none" />
            </Svg>
            <Svg>
              <path d="M1.5 1.5h13v13h-13z" stroke="#999" />
              <path d="M4 4h6v6H4z" fill="#eee" stroke="none" />
              <path d="M6.5 6.5h6v6h-6z" fill={ORANGE} stroke="none" />
              <path d="M0 1h2M1 0v2M14 1h2M15 0v2M0 15h2M1 14v2M14 15h2M15 14v2" stroke="#bbb" />
            </Svg>
            <span className="ml-[3px]">模型历史记录</span>
          </TreeRow>
          <TreeRow odd>
            <ChildBranch />
            <Svg sw={1.3}>
              <path d="M.5 8c4-6 11-6 15 0-4 6-11 6-15 0zM2 15L14 1" />
              <circle cx="8" cy="8" r="3" />
            </Svg>
            <Svg>
              <path d="M8 3v6l-5 4M8 9l5 4" stroke="#d05a80" strokeWidth="1.5" />
              <path d="M8 0l2 4H6zM0 15l2-4 2 3zM16 15l-2-4-2 3z" fill="#d05a80" stroke="none" />
              <path d="M4.5 13V9L8 7l3.5 2v4" stroke="#d05a80" />
            </Svg>
            <span className="ml-[3px] text-[#808080]">基准坐标系 (0)</span>
          </TreeRow>
          <TreeRow
            status={
              <Svg w={10} h={14}>
                <path d="M2.5.5h-2v12h2M.5 6.5h2" />
                <path d="M4.5 1.5h3v2h-3zM4.5 10.5h3v2h-3z" />
                <path d="M4 5h4v4H4z" fill={ORANGE} stroke="none" />
              </Svg>
            }
          >
            <ChildBranch last />
            <Svg sw={1.3}>
              <path d="M.5 8c4-6 11-6 15 0-4 6-11 6-15 0z" />
              <circle cx="8" cy="8" r="3.5" fill="#fff" stroke="none" />
            </Svg>
            <Svg>
              <path d="M.5.5h15v15H.5z" strokeDasharray="2 2" />
              <path d="M3.5 3v10.5H12M2 8c2-3 6-5 11-5" stroke={CYAN} />
              <circle cx="8.5" cy="8.5" r="2.5" stroke={CYAN} />
            </Svg>
            <span className="ml-[3px] text-[17px] font-bold">草图 (1) "SKETCH_000"</span>
          </TreeRow>
          <TreeRow odd />
          <TreeRow />
        </tbody>
      </table>
    </div>
  );
}

function Section({ title, open = false }: { title: string; open?: boolean }) {
  return (
    <button className="flex h-[25px] w-full items-center text-[19px] leading-6 text-[#3fa9cb]">
      <span className="flex w-7 justify-center">
        {open ? (
          <Svg w={14} h={7}>
            <path d="M0 0h14L7 7z" fill="currentColor" stroke="none" />
          </Svg>
        ) : (
          <Svg w={7} h={14}>
            <path d="M0 0v14l7-7z" fill="currentColor" stroke="none" />
          </Svg>
        )}
      </span>
      {title}
    </button>
  );
}

function Navigator() {
  return (
    <div className="flex w-[407px] shrink-0 flex-col overflow-hidden">
      <div className="flex h-[31px] shrink-0 items-center gap-1 pr-2.5 pb-px pl-1.5 text-base">
        <PartIcon />
        <h2>部件导航器</h2>
        <button aria-label="最大化" className="ml-auto">
          <Svg w={13} h={12}>
            <path d="M.5 1h12v10.500H.5z" />
            <path d="M0 1h13" strokeWidth="2" />
          </Svg>
        </button>
      </div>
      <div className="relative shrink-0">
        <PartTree />
        {/* horizontal scrollbar of the tree */}
        <div className="absolute right-2.5 bottom-px left-[9px] flex h-[17px] items-center bg-[#efefef]">
          <div className="ml-[4.5%] h-0.5 w-2/3 bg-[#808080]" />
        </div>
      </div>
      <div className="mt-px mr-[9px] ml-2 h-[7px] shrink-0 border border-[#1b1b1b] bg-[#5a5a5a]" />
      <div className="mr-[9px] ml-2 flex flex-1 flex-col">
        <div className="border-x border-b-2 border-x-transparent border-b-[#1f1f1f] pt-1">
          <Section title="搜索" />
        </div>
        <div className="border-x border-b-2 border-x-transparent border-b-[#1f1f1f] pt-0.5">
          <Section title="相关性" />
        </div>
        <div className="flex-1 overflow-hidden border-x border-[#1b1b1b] pt-0.5">
          <Section title="细节" open />
          <div className="mx-[3px] mt-2">
            <table className="w-full table-fixed border-separate border-spacing-0 border border-[#151515] text-base">
              <thead>
                <tr className="bg-[#5a5a5a] text-left leading-6">
                  <th className="w-[65px] border-r border-b border-[#1b1b1b] p-0 pl-[7px] font-normal">
                    参数
                  </th>
                  <th className="w-10 border-r border-b border-[#1b1b1b] p-0 pl-1.5 font-normal">值</th>
                  <th className="w-[88px] border-r border-b border-[#1b1b1b] p-0 pl-1.5 font-normal">
                    <span className="flex items-center gap-3.5">
                      表达式
                      <SortArrow />
                    </span>
                  </th>
                  <th className="border-b border-[#1b1b1b] p-0" />
                </tr>
              </thead>
              <tbody>
                {[0, 1, 2, 3].map((row) => (
                  <tr key={row} className={row % 2 ? "h-6 bg-[#373737]" : "h-6"}>
                    <td className="border-r border-b border-[#242424]" />
                    <td className="border-r border-b border-[#242424]" />
                    <td className="border-r border-b border-[#242424]" />
                    <td className="border-b border-[#242424]" />
                  </tr>
                ))}
              </tbody>
            </table>
          </div>
        </div>
      </div>
    </div>
  );
}

// ---------- graphics window ----------

const CONSTRAINTS: { label: string; icon: ReactNode }[] = [
  { label: "重合", icon: <path d="M0 24l10-10M14 10L24 0M7 12h9M12 7v9M12 11l4-4" /> },
  { label: "共线", icon: <path d="M0 24l10-10M14 10L24 0" /> },
  { label: "水平", icon: <path d="M0 11.5h24" /> },
  { label: "竖直", icon: <path d="M12.5 0v24" /> },
  {
    label: "相切",
    icon: (
      <>
        <path d="M0 19L19 0" />
        <circle cx="15.5" cy="15.5" r="8" />
      </>
    ),
  },
  { label: "平行", icon: <path d="M0 16L16 0M8 24L24 8" /> },
  { label: "垂直", icon: <path d="M0 8l16 16M8 16L24 0" /> },
  { label: "等长", icon: <path d="M1 8.5h22M1 15.5h22" /> },
  {
    label: "对称",
    icon: (
      <>
        <path d="M.5 2.5h6v7h10v-7h6v19H.5z" />
        <path d="M11.5 1v22" stroke={ORANGE} strokeDasharray="4 2" />
      </>
    ),
  },
  {
    label: "点在线上",
    icon: (
      <>
        <path d="M2.5 0v24M7 11.5h5M13 11.5h2M16 11.5h7" />
        <circle cx="2.5" cy="11.5" r="2.5" fill={ORANGE} stroke="none" />
      </>
    ),
  },
  {
    label: "关系查找",
    icon: (
      <>
        <path d="M3.5 1v18.5h9M0 12C5 5 11 1 22 .5" stroke={CYAN} />
        <circle cx="12.5" cy="11.5" r="5" stroke={CYAN} />
        <path d="M11 12v11l6-5 6 5V12l-6 5z" fill="#fff" stroke="none" />
      </>
    ),
  },
];

function GraphicsWindow() {
  return (
    <main className="flex min-w-0 flex-1 flex-col border-l border-[#151515]">
      <div className="flex h-8 shrink-0 border-b-2 border-[#3497ba]">
        <div className="flex w-[163px] items-center bg-[#3497ba] pl-1.5">
          <Svg>
            <path d="M2.5 1v11.5h6M0 8C3 4 8 1 15 .5" stroke="#00d0ff" />
            <circle cx="8" cy="8" r="3.5" stroke="#00d0ff" />
            <path d="M6 15l1-3 6-6 2 2-6 6z" fill="#ffd24a" stroke="#3a2a10" />
            <path d="M13 6l2 2" stroke="#e03030" strokeWidth="2" />
          </Svg>
          <span className="ml-1 text-base leading-6">_model43.prt</span>
          <span className="ml-1.5 flex">
            <Svg w={10} h={12} sw={1.5}>
              <path d="M8 4V1H1v10h7V9M1 3.5h7M5 8l4-4" />
            </Svg>
          </span>
          <button aria-label="关闭" className="ml-1.5 text-[#8f8480]">
            <Svg w={9} sw={2}>
              <path d="M1 1l7 7M8 1L1 8" />
            </Svg>
          </button>
        </div>
      </div>
      <div className="relative flex-1 overflow-hidden bg-[#24252a]">
        <div className="absolute inset-y-0 left-[63.3%] border-l border-dashed border-[#a5bba2]" />
        <div className="absolute inset-x-0 bottom-[61px] border-t border-dashed border-[#f08080]" />
        <div className="absolute bottom-[55px] left-[63.3%] -ml-1.5 text-[#0a0ae0]">
          <Svg w={13} sw={2}>
            <path d="M6.5 0v13M0 6.5h13" />
          </Svg>
        </div>
        <div className="relative mt-[5px] ml-[46.7%] flex h-[33px] w-fit items-center border-b border-[#151515] bg-[#323232] pr-1.5 pl-2.5">
          <div className="flex gap-[9px]">
            {CONSTRAINTS.map((c) => (
              <button key={c.label} aria-label={c.label}>
                <Svg w={24} sw={1.3}>
                  {c.icon}
                </Svg>
              </button>
            ))}
          </div>
          <div className="ml-[7px] h-[26px] w-px bg-[#151515]" />
          <button aria-label="更多关系" className="mt-3.5 ml-1">
            <Caret />
          </button>
        </div>
        <div className="mt-[5px] ml-[44.9%] border-t border-[#b06c10]" />
        <p className="absolute right-1 bottom-0.5 font-['Liberation_Mono','Noto_Sans_CJK_SC',monospace] text-[13px] leading-5 text-[#d0d0d0]">
          UG<span className="text-base leading-5">爱好者论坛</span>@whinnyjia
        </p>
      </div>
    </main>
  );
}

function App() {
  return (
    <div className="flex h-screen flex-col overflow-hidden bg-[#323232] font-['Noto_Sans','Noto_Sans_CJK_SC',sans-serif] text-[15px] leading-5 text-white">
      <Header />
      <Ribbon />
      <SelectionBar />
      <div className="flex min-h-0 flex-1">
        <ResourceBar />
        <Navigator />
        <GraphicsWindow />
      </div>
    </div>
  );
}

export default App;
